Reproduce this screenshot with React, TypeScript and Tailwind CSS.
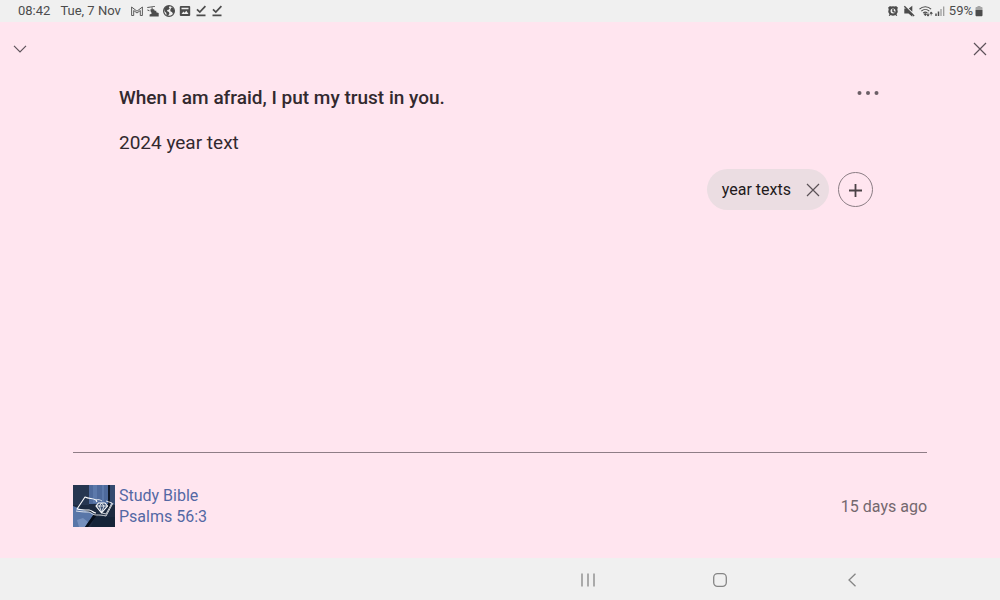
import type { ReactNode } from "react";

function Glyph({ className, box, children }: { className: string; box: string; children: ReactNode }) {
  return (
    <svg className={className} viewBox={box} fill="none" aria-hidden="true">
      {children}
    </svg>
  );
}

function Cross({ className }: { className: string }) {
  return (
    <Glyph className={className} box="0 0 14 14">
      <path d="M1 1l12 12M13 1L1 13" stroke="currentColor" strokeWidth="1.2" />
    </Glyph>
  );
}

function DownloadDone() {
  return (
    <Glyph className="h-3 w-3" box="0 0 12 12">
      <path d="M2 4.4l2.8 2.7L10.4 1.1M1.5 10.3h9" stroke="currentColor" strokeWidth="1.7" />
    </Glyph>
  );
}

function NotificationIcons() {
  return (
    <div className="flex items-center gap-1">
      <Glyph className="h-3 w-3" box="0 0 12 12">
        <path d="M.6 10.5V2L6 6.200 11.400 2v8.500H9.300V5.500L6 8 2.700 5.500v5z" stroke="currentColor" strokeWidth=".9" />
      </Glyph>
      <Glyph className="h-3 w-3" box="0 0 12 12">
        <path d="M.3 1.900L8 .9v.9L.3 2.900zM4.600 2.400h1v2.200h-1zM3.500 4.300h3.600l.6 1.400h1.600v1.500l2.400.8v3.500H2.600V9.600l2-.9-.3-1.500-.8-1zM.5 4.300l2 1.200v.8l-2-.9z" fill="currentColor" />
      </Glyph>
      <Glyph className="h-3 w-3" box="0 0 12 12">
        <circle cx="6" cy="6" r="5.4" stroke="currentColor" strokeWidth="1.2" />
        <path d="M1.1 3.6L3.6 1l3 .1-.8 1.5 1 .8-1.3 1.4-1.4.3.2 1.2 1.6.7.5 1.5-1.5 2.8-1.4-1.4-.2-2L1.5 6zM8.3 2.6l1.7.1 1.3 2.500-.2 2.400-1.200 1.200L9 7.100l-1.400-.6L7.200 5z" fill="currentColor" />
      </Glyph>
      <Glyph className="h-3 w-3" box="0 0 12 12">
        <path fillRule="evenodd" d="M1.500 1h9l.7.700v8.600l-.7.700h-9l-.7-.700V1.700zM2.500 8.900h7L7.300 5.800 5.600 7.800 4.400 6.600zM2.500 2.700v1.500h7V2.700z" fill="currentColor" />
      </Glyph>
      <DownloadDone />
      <DownloadDone />
    </div>
  );
}

function SystemIcons() {
  return (
    <div className="flex items-center gap-1">
      <Glyph className="h-3 w-3" box="0 0 12 12">
        <path fillRule="evenodd" d="M1 2.7L3 1l1 .6a5 5 0 0 1 4 0L9 1l2 1.7-.7 1.2a5 5 0 0 1-.8 5.3l.8 1.3-1 .6L8.4 10a5 5 0 0 1-4.8 0l-.9 1.1-1-.6.8-1.3a5 5 0 0 1-.8-5.3zM6 3.6a2.500 2.500 0 1 0 0 5 2.500 2.500 0 0 0 0-5z" fill="currentColor" />
        <path d="M6 4v2.300l1.800 1" stroke="currentColor" strokeWidth="1.500" />
      </Glyph>
      <Glyph className="h-3 w-3" box="0 0 12 12">
        <path d="M1.300 3.600h2.600l5.400 5.200v2.900L5.500 8.500H1.300zM9.300.8v5.900L5.800 3.500z" fill="currentColor" />
        <path d="M1.300 1.200l9.800 9.800" stroke="currentColor" strokeWidth="1.400" />
      </Glyph>
      <div className="flex items-center gap-0.5">
        <Glyph className="h-3 w-3.5" box="0 0 14 12">
          <path d="M.5 4.200c3.300-3.200 8.300-3.200 11.600 0M2.300 6.200c2.300-2.200 5.700-2.200 8 0M4.100 8.200c1.300-1.200 3-1.200 4.200 0" stroke="currentColor" strokeWidth="1.100" />
          <path d="M5 9.200l1.300-.9 1.200.9-1.200 1.500zM9 7.500v3.500M7.800 9.700L9 11.200l1.200-1.500zM12.200 10.500V7M11 8.400l1.200-1.500 1.200 1.500z" fill="currentColor" stroke="currentColor" strokeWidth=".7" />
        </Glyph>
        <Glyph className="h-3 w-2.5" box="0 0 10 12">
          <path d="M1 8.500V11M3.500 6.500V11" stroke="currentColor" strokeWidth="1.500" />
          <path d="M6 4v7M8.700 1.500V11" stroke="currentColor" strokeWidth="1.200" opacity=".55" />
        </Glyph>
      </div>
      <div className="flex items-center gap-0.5">
        <span>59%</span>
        <Glyph className="h-3 w-2" box="0 0 8 12">
          <path d="M2.500 1h3v1H7l.5.700V5H.5V2.700L1 2h1.500z" fill="currentColor" opacity=".45" />
          <path d="M.5 5h7v5.500l-.7.700H1.200l-.7-.7z" fill="currentColor" />
        </Glyph>
      </div>
    </div>
  );
}

function BookCover() {
  return (
    <svg className="size-[42px] shrink-0" viewBox="0 0 42 42" fill="none" aria-hidden="true">
      <path d="M0 0h42v42H0z" fill="#1c2a40" />
      <path d="M0 0h16v20H0z" fill="#263650" />
      <path d="M16 0h19v19H16z" fill="#4e6a9c" />
      <path d="M20 0h4v18h-4zM29 0h2v18h-2z" fill="#5c79ab" />
      <path d="M35 0h2v24h-2z" fill="#0f1929" />
      <path d="M37 0h5v20h-5z" fill="#344a70" />
      <path d="M22 32h20v10H18z" fill="#152438" />
      <path d="M0 21l21 8-9 13H0z" fill="#5976a8" />
      <path d="M4 35l6-2 5 4-3 5H6z" fill="#8ba2cb" opacity=".6" />
      <path d="M21 29l3 1-9 12h-3z" fill="#080f1b" />
      <path d="M24 17l-1-2c-3-2-7-1-11-3L4 24c4 1 8 1 12 1 3 0 4 3 7 3" stroke="#fff" strokeWidth="1.1" strokeLinejoin="round" />
      <path d="M33 16l6 2-6 11-4-1M23 15c3-1 4 0 6 1M3 26c6 1 9 1 13 1 3 1 4 3 7 3 4 0 6 0 10 1l7-13" stroke="#fff" strokeWidth=".8" />
      <path d="M25.500 18h6.500l2.500 3-6 7-5.500-7z" fill="#3b5073" stroke="#fff" strokeWidth="1.100" />
      <path d="M23 21h11.500M26.500 21l2 6.500 2.500-6.500M26.500 21l2-3 2.500 3" stroke="#fff" strokeWidth=".8" />
    </svg>
  );
}

export default function App() {
  return (
    <div className="flex min-h-screen flex-col bg-[#ffe5ef] font-['Roboto',sans-serif]">
      <div className="flex h-[22px] items-center justify-between bg-[#f0f0f0] pr-[17px] pb-px pl-[18px] text-[13px] leading-5 text-[#4c4c4c]">
        <div className="flex items-center gap-2.5">
          <time>08:42</time>
          <span>Tue, 7 Nov</span>
          <NotificationIcons />
        </div>
        <SystemIcons />
      </div>

      <main className="flex flex-1 flex-col">
        <header className="flex h-[54px] items-center justify-between px-3 text-[#5d525a]">
          <button type="button" aria-label="Collapse note" className="flex size-4 items-center justify-center">
            <Glyph className="h-2 w-3.5" box="0 0 14 8">
              <path d="M1 .8l6 6 6-6" stroke="currentColor" strokeWidth="1.2" />
            </Glyph>
          </button>
          <button type="button" aria-label="Close note" className="flex size-4 items-center justify-center">
            <Cross className="size-3.5" />
          </button>
        </header>

        <article className="flex-1 px-[119px] pt-2.5">
          <div className="flex items-start justify-between">
            <h1 className="text-[19px] leading-6 font-medium text-[#32292e]">When I am afraid, I put my trust in you.</h1>
            <button type="button" aria-label="More options" className="flex h-3.5 w-6 items-center justify-center text-[#6b5f66]">
              <Glyph className="h-1 w-6" box="0 0 24 4">
                <circle cx="2.5" cy="2" r="2" fill="currentColor" />
                <circle cx="11" cy="2" r="2" fill="currentColor" />
                <circle cx="19.5" cy="2" r="2" fill="currentColor" />
              </Glyph>
            </button>
          </div>
          <p className="mt-[21px] text-[19px] leading-6 text-[#32292e]">2024 year text</p>
          <div className="mt-3.5 flex items-center justify-end gap-[9px] pr-2">
            <div className="flex h-[41px] items-center gap-[15px] rounded-full bg-[#ebdde2] pr-[9px] pl-[15px] text-[16px] text-[#1f1a1c]">
              <span>year texts</span>
              <button type="button" aria-label="Remove year texts" className="text-[#5b5257]">
                <Cross className="size-3.5" />
              </button>
            </div>
            <button
              type="button"
              aria-label="Add tag"
              className="flex size-[35px] items-center justify-center rounded-full border border-[#8b7d84] text-[#4a4246]"
            >
              <Glyph className="size-3.5" box="0 0 14 14">
                <path d="M6.5 1v13M0 7.5h13" stroke="currentColor" strokeWidth="1.8" />
              </Glyph>
            </button>
          </div>
        </article>

        <footer className="mx-[73px] flex items-center justify-between border-t border-[#8f7d86] pt-8 pb-[31px]">
          <a href="#psalms-56-3" className="flex items-center gap-1 text-[16px] leading-[21px] text-[#5468a4]">
            <BookCover />
            <span className="flex flex-col">
              <span>Study Bible</span>
              <span>Psalms 56:3</span>
            </span>
          </a>
          <time className="text-[16px] leading-[21px] text-[#74686e]">15 days ago</time>
        </footer>
      </main>

      <nav aria-label="System navigation" className="flex h-[42px] justify-end bg-[#f0f0f0] pt-0.5 pr-[82px] text-[#858585]">
        <button type="button" aria-label="Recent apps" className="flex w-[132px] items-center justify-center">
          <Glyph className="size-3.5" box="0 0 14 14">
            <path d="M1 .5v13M7 .5v13M13 .5v13" stroke="currentColor" strokeWidth="1.3" />
          </Glyph>
        </button>
        <button type="button" aria-label="Home" className="flex w-[132px] items-center justify-center">
          <Glyph className="size-3.5" box="0 0 14 14">
            <rect x=".7" y=".7" width="12.6" height="12.6" rx="3.8" stroke="currentColor" strokeWidth="1.3" />
          </Glyph>
        </button>
        <button type="button" aria-label="Back" className="flex w-[132px] items-center justify-center">
          <Glyph className="h-3.5 w-2" box="0 0 8 14">
            <path d="M7.5.7L1 7l6.500 6.300" stroke="currentColor" strokeWidth="1.3" />
          </Glyph>
        </button>
      </nav>
    </div>
  );
}
